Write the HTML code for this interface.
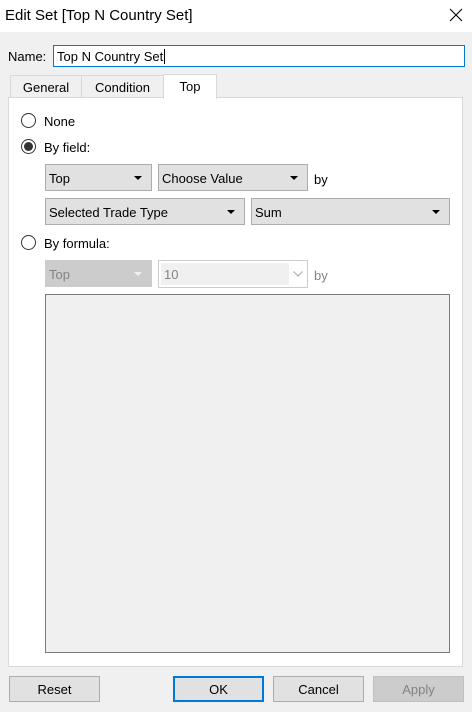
<!DOCTYPE html>
<html><head><style>
*{margin:0;padding:0;box-sizing:border-box}
body{width:472px;height:712px;background:#f0f0f0;font-family:"Liberation Sans",sans-serif;font-size:13px;color:#000;position:relative;overflow:hidden}
.a{position:absolute}
.title{left:0;top:0;width:472px;height:32px;background:#fff}
.title span{position:absolute;left:5px;top:7px;font-size:15px}
.dd{position:absolute;background:#e1e1e1;border:1px solid #adadad;height:27px;line-height:27px;padding-left:3px;font-size:13px}
.dd::after{content:"";position:absolute;right:9px;top:11px;border-left:4px solid transparent;border-right:4px solid transparent;border-top:4px solid #000}
.dis::after{border-top-color:#f0f0f0}
.btn{position:absolute;top:676px;width:91px;height:26px;background:#e1e1e1;border:1px solid #adadad;text-align:center;line-height:25px;font-size:13px}
.radio{position:absolute;width:15px;height:15px;border:1px solid #333;border-radius:50%;background:#fff}
.lbl{position:absolute;font-size:13px}
</style></head><body>
<div class="a title"><span>Edit Set [Top N Country Set]</span>
<svg class="a" style="left:449px;top:8px" width="14" height="14"><path d="M1 1L13 13M13 1L1 13" stroke="#000" stroke-width="1.1"/></svg></div>
<div class="lbl" style="left:8px;top:49px">Name:</div>
<div class="a" style="left:53px;top:45px;width:412px;height:22px;background:#fff;border:1px solid #0078d7;padding:3px 0 0 3px;font-size:13px">Top N Country Set<span style="border-left:1px solid #000;margin-left:1px"></span></div>
<div class="a" style="left:10px;top:75px;width:72px;height:23px;background:#f0f0f0;border:1px solid #d9d9d9;text-align:center;line-height:23px;font-size:13px">General</div>
<div class="a" style="left:81px;top:75px;width:83px;height:23px;background:#f0f0f0;border:1px solid #d9d9d9;text-align:center;line-height:23px;font-size:13px">Condition</div>
<div class="a" style="left:8px;top:97px;width:455px;height:570px;background:#fff;border:1px solid #d9d9d9"></div>
<div class="a" style="left:163px;top:74px;width:54px;height:25px;background:#fff;border:1px solid #d9d9d9;border-bottom:none;text-align:center;line-height:24px;font-size:13px">Top</div>
<div class="radio" style="left:21px;top:113px"></div><div class="lbl" style="left:44px;top:114px">None</div>
<div class="radio" style="left:21px;top:139px"><div style="position:absolute;left:2px;top:2px;width:9px;height:9px;border-radius:50%;background:#333"></div></div><div class="lbl" style="left:44px;top:140px">By field:</div>
<div class="dd" style="left:45px;top:164px;width:107px">Top</div>
<div class="dd" style="left:158px;top:164px;width:150px">Choose Value</div>
<div class="lbl" style="left:314px;top:172px">by</div>
<div class="dd" style="left:45px;top:198px;width:200px">Selected Trade Type</div>
<div class="dd" style="left:251px;top:198px;width:199px">Sum</div>
<div class="radio" style="left:21px;top:235px"></div><div class="lbl" style="left:44px;top:236px">By formula:</div>
<div class="dd dis" style="left:45px;top:260px;width:107px;background:#ccc;border-color:#ccc;color:#838383">Top</div>
<div class="a" style="left:158px;top:260px;width:150px;height:28px;background:#fff;border:1px solid #ccc">
<div class="a" style="left:2px;top:2px;width:128px;height:22px;background:#f0f0f0;color:#838383;padding:4px 0 0 3px;font-size:13px">10</div>
<svg class="a" style="left:134px;top:10px" width="10" height="6"><path d="M0.5 0.5L5 5L9.5 0.5" stroke="#aaa" fill="none"/></svg></div>
<div class="lbl" style="left:314px;top:268px;color:#838383">by</div>
<div class="a" style="left:45px;top:294px;width:405px;height:359px;background:#f0f0f0;border:1px solid #7a7a7a"></div>
<div class="btn" style="left:9px">Reset</div>
<div class="btn" style="left:173px;border:2px solid #0078d7;line-height:23px">OK</div>
<div class="btn" style="left:273px">Cancel</div>
<div class="btn" style="left:373px;background:#ccc;border-color:#bfbfbf;color:#838383">Apply</div>
</body></html>
